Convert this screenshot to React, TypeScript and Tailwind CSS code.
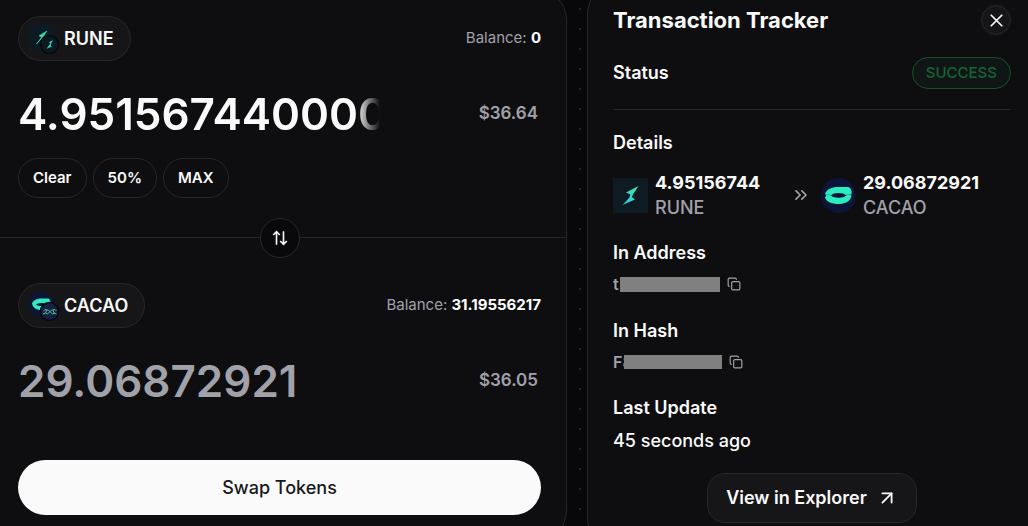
/**
 * Swap screen — token swap form on the left, transaction tracker on the right.
 */

import { useState } from "react";
import type { ReactNode } from "react";
import { ArrowUpRight, ChevronsRight, Copy, X } from "lucide-react";

export default function App() {
  return (
    <div className="h-screen overflow-hidden bg-[#08080a] bg-[radial-gradient(circle,#242427_1px,transparent_1px)] bg-[size:20px_20px] bg-[position:10px_-1px] font-['Inter',sans-serif] text-[#fafafa]">
      <div className="-mr-[9px] -ml-2 flex items-start gap-5">
        <SwapCard />
        <TrackerCard />
      </div>
    </div>
  );
}

// ─── Swap form ───

function SwapCard() {
  const [amount, setAmount] = useState("4.951567440000");

  return (
    <main className="-mt-3 min-w-0 flex-1 rounded-[32px] border border-[#27272a] bg-[#0e0e10]">
      <section aria-label="You send" className="border-b border-[#27272a] px-[25px] pt-[27px] pb-[39px]">
        <TokenRow symbol="RUNE" balance="0" icon={<RuneBadge />} />
        <div className="mt-[25px] flex h-14 items-center justify-between pr-[3px]">
          <input
            aria-label="Amount to swap"
            value={amount}
            onChange={(e) => setAmount(e.target.value)}
            className="w-[362px] bg-transparent text-[44px] leading-[56px] font-semibold outline-none [mask-image:linear-gradient(to_right,black_338px,transparent_362px)]"
          />
          <span className="text-[17px] font-semibold text-[#a1a1aa]">$36.64</span>
        </div>
        <div className="mt-4 flex gap-[6px]">
          <Chip onClick={() => setAmount("")}>Clear</Chip>
          <Chip>50%</Chip>
          <Chip>MAX</Chip>
        </div>
      </section>

      <section aria-label="You receive" className="relative px-[25px] pt-[45px] pb-[26px]">
        <button
          type="button"
          aria-label="Switch tokens"
          className="absolute -top-5 left-1/2 grid size-10 -translate-x-1/2 place-items-center rounded-full border border-[#27272a] bg-[#09090b]"
        >
          <SwitchIcon />
        </button>
        <TokenRow symbol="CACAO" balance="31.19556217" icon={<CacaoBadge />} />
        <div className="mt-[25px] flex h-14 items-center justify-between pr-[3px]">
          <output className="text-[44px] leading-[56px] font-semibold text-[#a1a1aa]">
            29.06872921
          </output>
          <span className="text-[17px] font-semibold text-[#a1a1aa]">$36.05</span>
        </div>
        <button
          type="button"
          className="mt-[51px] h-[55px] w-full rounded-full bg-[#fafafa] text-lg font-medium text-[#18181b]"
        >
          Swap Tokens
        </button>
      </section>
    </main>
  );
}

function TokenRow({
  symbol,
  balance,
  icon,
}: {
  symbol: string;
  balance: string;
  icon: ReactNode;
}) {
  return (
    <div className="flex items-center justify-between">
      <button
        type="button"
        className="flex h-[45px] items-center gap-1 rounded-full border border-[#27272a] bg-[#161618] pr-4 pl-[10px] text-lg font-semibold"
      >
        {icon}
        {symbol}
      </button>
      <p className="text-[15px] text-[#a1a1aa]">
        Balance: <strong className="font-bold text-white">{balance}</strong>
      </p>
    </div>
  );
}

function Chip({
  children,
  onClick,
}: {
  children: ReactNode;
  onClick?: () => void;
}) {
  return (
    <button
      type="button"
      onClick={onClick}
      className="h-10 rounded-full border border-[#27272a] px-[14px] text-[15px] font-semibold"
    >
      {children}
    </button>
  );
}

// ─── Transaction tracker ───

function TrackerCard() {
  return (
    <aside className="-mt-[18px] w-[450px] shrink-0 rounded-[32px] border border-[#27272a] bg-[#0e0e10] px-[25px] pt-[22px] pb-[26px]">
      <header className="flex h-[30px] items-center justify-between">
        <h1 className="text-[22px] font-bold">Transaction Tracker</h1>
        <button
          type="button"
          aria-label="Close"
          className="grid size-[30px] place-items-center rounded-full border border-[#27272a] bg-[#161618]"
        >
          <X size={21} strokeWidth={2} />
        </button>
      </header>

      <div className="mt-[22px] flex items-center justify-between border-b border-[#27272a] pb-5">
        <h2 className="text-lg font-semibold">Status</h2>
        <span className="flex h-8 items-center rounded-full border border-[#14532d] bg-[#0f1615] px-[13px] text-[15px] font-medium text-[#166534]">
          SUCCESS
        </span>
      </div>

      <h2 className="mt-[19px] text-lg font-semibold">Details</h2>
      <div className="mt-[13px] flex items-center">
        <TokenAmount icon={<RuneLogo />} amount="4.95156744" symbol="RUNE" />
        <div className="flex w-10 justify-center text-[#a1a1aa]">
          <ChevronsRight size={20} strokeWidth={2} />
        </div>
        <TokenAmount icon={<CacaoLogo />} amount="29.06872921" symbol="CACAO" />
      </div>

      <h2 className="mt-[19px] text-lg font-semibold">In Address</h2>
      <MaskedValue label="Copy address">
        <span className="w-[7px]">t</span>
        <span className="h-[15px] w-[100px] bg-[#808080]" />
      </MaskedValue>

      <h2 className="mt-[19px] text-lg font-semibold">In Hash</h2>
      <MaskedValue label="Copy hash">
        <span>F8</span>
        <span className="relative -ml-[9px] h-[14px] w-[98px] bg-[#808080]" />
      </MaskedValue>

      <h2 className="mt-[18px] text-lg font-semibold">Last Update</h2>
      <p className="mt-[5px] text-lg font-medium">45 seconds ago</p>

      <a
        href="#explorer"
        className="mx-auto mt-[18px] flex h-[50px] w-fit items-center gap-[9px] rounded-[18px] border border-[#27272a] bg-[#161618] px-[18px] text-lg font-semibold"
      >
        View in Explorer
        <ArrowUpRight size={22} strokeWidth={2} />
      </a>
    </aside>
  );
}

function TokenAmount({
  icon,
  amount,
  symbol,
}: {
  icon: ReactNode;
  amount: string;
  symbol: string;
}) {
  return (
    <div className="flex w-[168px] items-center gap-[7px]">
      {icon}
      <div className="text-lg leading-[25px]">
        <p className="font-bold">{amount}</p>
        <p className="font-medium text-[#a1a1aa]">{symbol}</p>
      </div>
    </div>
  );
}

function MaskedValue({ label, children }: { label: string; children: ReactNode }) {
  return (
    <div className="mt-[3px] flex h-7 items-center text-base font-semibold text-[#a1a1aa]">
      {children}
      <button type="button" aria-label={label} className="ml-[7px]">
        <Copy size={14} strokeWidth={2} />
      </button>
    </div>
  );
}

// ─── Icons ───

function SwitchIcon() {
  return (
    <svg width="16" height="16" viewBox="0 0 16 16" fill="none" stroke="currentColor" strokeWidth="1.6" aria-hidden="true">
      <path d="M4.5 14.8V2M1.2 5l3.3-3.4L7.8 5" />
      <path d="M11.5 1.2V14M8.2 11l3.3 3.4 3.3-3.4" />
    </svg>
  );
}

function RuneLogo() {
  return (
    <svg width="35" height="35" viewBox="0 0 35 35" className="shrink-0" aria-hidden="true">
      <defs>
        <linearGradient id="bolt" x1="10" y1="27" x2="25" y2="8" gradientUnits="userSpaceOnUse">
          <stop offset="0" stopColor="#28c8ee" />
          <stop offset="1" stopColor="#3ee8a6" />
        </linearGradient>
      </defs>
      <rect width="35" height="35" fill="#0e1b22" />
      <path d="M25.500 8 13 14.500l4.300 2-.8 3L9.500 27l12.500-5.500-3.200-2.500 1.400-3z" fill="url(#bolt)" />
    </svg>
  );
}

function CacaoLogo() {
  return (
    <svg width="35" height="35" viewBox="0 0 35 35" className="shrink-0" aria-hidden="true">
      <circle cx="17.5" cy="17.5" r="17.5" fill="#0b1539" />
      <path d="M4 16C6 10.5 12 9 17.5 9h10c2 1 4 4 3 7l-1 1 1 1c-1.5 6-7 8-13 8-6.500 0-12-2-13.500-6.500L5.500 17z" fill="#2bedc0" />
      <path d="M9.500 17.500c4-3.300 12-3.300 16 0-4 3-12 3-16 0z" fill="#0b1539" />
      <path d="m4.500 16.500 6 .7m14.500-.3 5.500-.8" stroke="#16a99f" strokeWidth=".8" />
    </svg>
  );
}

function RuneBadge() {
  return (
    <svg width="31" height="31" viewBox="0 0 31 31" aria-hidden="true">
      <rect width="25" height="25" y="2" fill="#0c1b23" />
      <path d="m18 8-8 4.800 3.500 1.700zM13.500 13l-6 8 5-5.500z" fill="#38dcae" stroke="#38dcae" strokeWidth=".6" />
      <circle cx="20.500" cy="21.500" r="9" fill="#0d1a22" stroke="#060b10" strokeWidth="1.600" />
      <path d="m24 17-4 2.200 1.200 1.600-3.700 5 5-2-.8-2z" fill="#2fd5bd" />
    </svg>
  );
}

function CacaoBadge() {
  return (
    <svg width="31" height="31" viewBox="0 0 31 31" aria-hidden="true">
      <circle cx="12.500" cy="14.500" r="12.500" fill="#0b1539" />
      <path d="M3 13.500c1.500-4 6-5 9.500-5h7c1.500 1 2.500 3 2 5l-9 6.500C8 20 4.500 18 3.500 15z" fill="#2bedc0" />
      <path d="M7 14.500c3-2 8-2 11 0-3 2-8 2-11 0z" fill="#0b1539" />
      <circle cx="20.500" cy="21.500" r="9" fill="#16203f" stroke="#080b16" strokeWidth="1.600" />
      <path d="m14 24 2.500-1 1-3h1.700l4.300 4 2-1m-11-2 1.500-1.500 2 .5m9.500 4-2.500-1-1-3h-1.500l-4 4-2-1m11-2-1.500-1.500-2 .5" fill="none" stroke="#57b9a0" strokeWidth="1" />
    </svg>
  );
}
